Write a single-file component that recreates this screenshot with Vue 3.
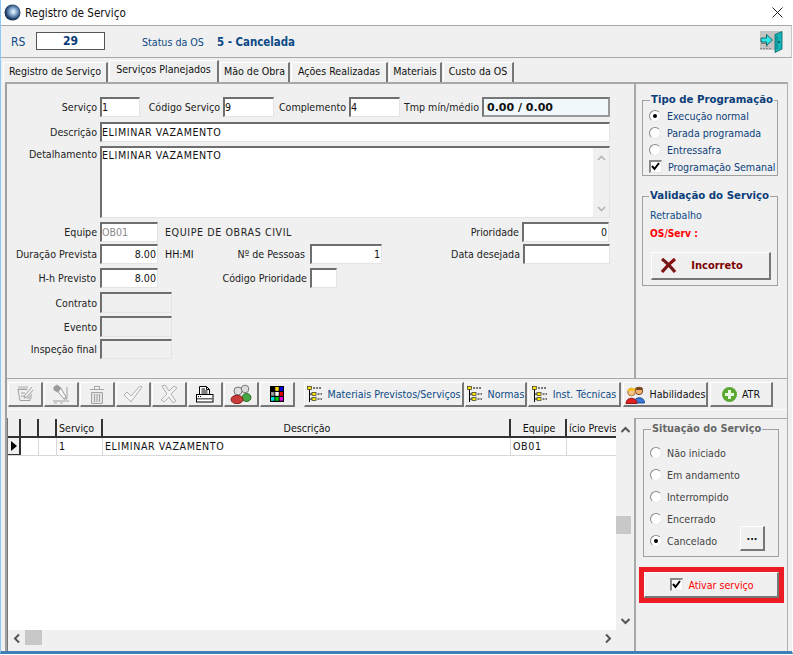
<script setup>
const tabs = ['Registro de Serviço', 'Serviços Planejados', 'Mão de Obra', 'Ações Realizadas', 'Materiais', 'Custo da OS']
const tabClasses = ['t0', 't1', 't2', 't3', 't4', 't5']
const treeButtons = [
  { label: 'Materiais Previstos/Serviços', cls: 'bm' },
  { label: 'Normas', cls: 'bn' },
  { label: 'Inst. Técnicas', cls: 'bi' }
]
const tipos = [
  { label: 'Execução normal', on: true },
  { label: 'Parada programada', on: false },
  { label: 'Entressafra', on: false }
]
const situacoes = [
  { label: 'Não iniciado', on: false },
  { label: 'Em andamento', on: false },
  { label: 'Interrompido', on: false },
  { label: 'Encerrado', on: false },
  { label: 'Cancelado', on: true }
]
</script>

<template>
  <div class="win">
    <div class="titlebar">
      <svg class="appicon" width="17" height="17" viewBox="0 0 17 17">
        <defs>
          <radialGradient id="sph" cx="0.55" cy="0.45" r="0.6">
            <stop offset="0" stop-color="#f4f8fc" />
            <stop offset="0.35" stop-color="#8fb2d8" />
            <stop offset="0.75" stop-color="#24456f" />
            <stop offset="1" stop-color="#0c1c34" />
          </radialGradient>
        </defs>
        <circle cx="8.5" cy="8.5" r="8" fill="url(#sph)" />
      </svg>
      <span class="wintitle">Registro de Serviço</span>
      <svg class="close" width="11" height="11" viewBox="0 0 11 11">
        <path d="M0.5 0.5 L10.5 10.5 M10.5 0.5 L0.5 10.5" stroke="#222" stroke-width="1" fill="none" />
      </svg>
    </div>

    <div class="header">
      <span class="rs">RS</span>
      <span class="rsbox">29</span>
      <span class="status">Status da OS</span>
      <span class="statusval">5 - Cancelada</span>
      <svg class="exit" width="23" height="22" viewBox="0 0 23 22">
        <rect x="0" y="0" width="22" height="19" fill="#c4c4c4" />
        <path d="M0 17.5 H12" stroke="#8a8a8a" stroke-dasharray="2 1" />
        <path d="M1 12.5 H7 V16" stroke="#7a7a7a" fill="none" />
        <path d="M15 3.5 L22 0.5 V18 L15 21.5 Z" fill="#12b5b8" stroke="#075f66" stroke-width="0.8" />
        <path d="M17 5 V18" stroke="#0a7f86" />
        <circle cx="19" cy="11" r="0.9" fill="#033" />
        <path d="M1 7 H6.5 V3.5 L12.5 9 L6.5 14.5 V11 H1 Z" fill="#2fe6e6" stroke="#0a5f60" stroke-width="0.9" />
      </svg>
    </div>

    <div class="tabs">
      <div v-for="(t, i) in tabs" :key="t" class="tab" :class="[tabClasses[i], { active: i === 1 }]">{{ t }}</div>
    </div>

    <div class="body">
      <div class="upper">
        <div class="form">
          <div class="row r1">
            <label class="lab w92">Serviço</label>
            <span class="inp i1">1</span>
            <label class="lab w79">Código Serviço</label>
            <span class="inp i2">9</span>
            <label class="lab w75">Complemento</label>
            <span class="inp i2">4</span>
            <label class="lab w78">Tmp mín/médio</label>
            <span class="tmp">0.00 / 0.00</span>
          </div>
          <div class="row r2">
            <label class="lab w92">Descrição</label>
            <span class="inp wide caps">ELIMINAR VAZAMENTO</span>
          </div>
          <div class="row r3">
            <label class="lab w92 topl">Detalhamento</label>
            <div class="area">
              <span class="areatext caps">ELIMINAR VAZAMENTO</span>
              <div class="areascroll">
                <svg width="9" height="6" viewBox="0 0 9 6"><path d="M1 5 L4.5 1.5 L8 5" stroke="#b5b5b5" stroke-width="1.6" fill="none" /></svg>
                <svg width="9" height="6" viewBox="0 0 9 6"><path d="M1 1 L4.5 4.5 L8 1" stroke="#b5b5b5" stroke-width="1.6" fill="none" /></svg>
              </div>
            </div>
          </div>
          <div class="row r4">
            <label class="lab w92">Equipe</label>
            <span class="inp i3 grey">OB01</span>
            <span class="free equipe caps">EQUIPE DE OBRAS CIVIL</span>
            <label class="lab prio">Prioridade</label>
            <span class="inp i4 right">0</span>
          </div>
          <div class="row r5">
            <label class="lab w92">Duração Prevista</label>
            <span class="inp i3 right">8.00</span>
            <span class="free hh">HH:MI</span>
            <label class="lab pess">Nº de Pessoas</label>
            <span class="inp i5 right">1</span>
            <label class="lab data">Data desejada</label>
            <span class="inp i4"></span>
          </div>
          <div class="row r6">
            <label class="lab w92 hp">H-h Previsto</label>
            <span class="inp i3 right">8.00</span>
            <label class="lab codp">Código Prioridade</label>
            <span class="inp i6"></span>
          </div>
          <div class="row r7">
            <label class="lab w92">Contrato</label>
            <span class="inp i7 off"></span>
          </div>
          <div class="row r8">
            <label class="lab w92">Evento</label>
            <span class="inp i7 off"></span>
          </div>
          <div class="row r9">
            <label class="lab w92">Inspeção final</label>
            <span class="inp i7 off"></span>
          </div>
        </div>

        <div class="side topside">
          <fieldset class="box tipo">
            <legend class="leg">Tipo de Programação</legend>
            <div v-for="o in tipos" :key="o.label" class="opt navy">
              <span class="radio" :class="{ on: o.on }"></span>{{ o.label }}
            </div>
            <div class="opt navy chk">
              <span class="check">
                <svg width="11" height="11" viewBox="0 0 11 11"><path d="M2 5 L4.5 8 L9 2" stroke="#000" stroke-width="2" fill="none" /></svg>
              </span>Programação Semanal
            </div>
          </fieldset>
          <fieldset class="box valid">
            <legend class="leg vleg">Validação do Serviço</legend>
            <div class="retra">Retrabalho</div>
            <div class="osserv">OS/Serv :</div>
            <div class="btn incorreto">
              <svg width="18" height="15" viewBox="0 0 18 15">
                <path d="M2 1 C6 4 10 8 15 14 M15 1 C10 5 6 9 2 14" stroke="#8a1010" stroke-width="3.2" fill="none" />
                <path d="M3 2 C6 4 10 8 14 13 M3 13 L6 10" stroke="#333" stroke-width="1" fill="none" />
              </svg>
              <span>Incorreto</span>
            </div>
          </fieldset>
        </div>
      </div>

      <div class="toolbar">
        <div class="btn ico">
          <svg width="20" height="20" viewBox="0 0 20 20" fill="none" stroke="#a0a0a0">
            <path d="M2.5 5.5 H12 M3 5.5 L5 16.5 H15 V11" />
            <path d="M4 2 V5 M6 2 V5 M8 2 V5 M10 2 V5 M12 2 V5" stroke-width="0.8" />
            <path d="M6 9 H10 M6 12 H9 M17 3 L10 11 L9 14 L12 13 L18 6" />
            <path d="M11 15 L17 9 V15 Z" fill="#c8c8c8" stroke="none" />
          </svg>
        </div>
        <div class="btn ico">
          <svg width="20" height="20" viewBox="0 0 20 20" fill="none" stroke="#a0a0a0">
            <path d="M3 3 L6 1 L10 4 L7 8 L3 6 Z" fill="#9a9a9a" />
            <path d="M7 8 L10 4 L15 13 L13 15 Z" fill="#f4f4f4" />
            <path d="M16 3 V15 M2 17 H18 M13 15 L16 15" />
            <path d="M3 19 H6 M9 19 H12" stroke-width="0.8" />
          </svg>
        </div>
        <div class="btn ico">
          <svg width="18" height="21" viewBox="0 0 18 21" fill="none" stroke="#a4a4a4">
            <path d="M2 5.5 H16 M6.5 5 V2.5 H11.5 V5" />
            <path d="M3.5 8.5 H14.5 V19.5 H3.5 Z" fill="#e4e4e4" />
            <path d="M6.5 10 V18 M9 10 V18 M11.5 10 V18" />
          </svg>
        </div>
        <div class="btn ico">
          <svg width="20" height="20" viewBox="0 0 20 20" fill="#f4f4f4" stroke="#b0b0b0"><path d="M1 11 L4 8 L8 12 L17 2 L19 3 L8 18 Z" /></svg>
        </div>
        <div class="btn ico">
          <svg width="20" height="20" viewBox="0 0 20 20" fill="#f4f4f4" stroke="#b0b0b0"><path d="M3 2 L6 1 L10 7 L15 2 L18 4 L12 10 L17 17 L14 19 L10 13 L5 18 L2 16 L8 10 Z" /></svg>
        </div>
        <div class="btn ico">
          <svg width="18" height="17" viewBox="0 0 18 17" fill="none" stroke="#000">
            <path d="M3.5 8.5 V0.5 H10.5 L13.5 3.5 V8.5" fill="#fff" />
            <path d="M10.5 0.5 V3.5 H13.5 M5.5 3 H9 M5.5 5 H11.5 M5.5 7 H11.5" />
            <rect x="0.5" y="8.5" width="16.5" height="7.5" fill="#fff" />
            <rect x="1" y="12" width="16" height="1.5" fill="#666" stroke="none" />
            <path d="M2 10.5 H6" stroke-dasharray="1 1" />
          </svg>
        </div>
        <div class="btn ico">
          <svg width="22" height="20" viewBox="0 0 22 20">
            <circle cx="15" cy="5" r="3.8" fill="#dcdcdc" stroke="#777" />
            <ellipse cx="16.5" cy="13.5" rx="4.5" ry="4" fill="#45a845" stroke="#2f6b2f" />
            <circle cx="8" cy="7" r="4" fill="#e0e0e0" stroke="#777" />
            <ellipse cx="7" cy="15.5" rx="6" ry="4.2" fill="#c93a3a" stroke="#8a2020" />
          </svg>
        </div>
        <div class="btn ico">
          <svg width="14" height="16" viewBox="0 0 14 16">
            <rect width="14" height="16" fill="#000" />
            <rect x="1" y="1" width="3.4" height="3.8" fill="#000" /><rect x="5.3" y="1" width="3.4" height="3.8" fill="#ffe000" /><rect x="9.6" y="1" width="3.4" height="3.8" fill="#0000e0" />
            <rect x="1" y="6" width="3.4" height="3.8" fill="#999" /><rect x="5.3" y="6" width="3.4" height="3.8" fill="#fff" /><rect x="9.6" y="6" width="3.4" height="3.8" fill="#e00000" />
            <rect x="1" y="11" width="3.4" height="3.8" fill="#00e0e0" /><rect x="5.3" y="11" width="3.4" height="3.8" fill="#00d000" /><rect x="9.6" y="11" width="3.4" height="3.8" fill="#e000e0" />
          </svg>
        </div>
        <div v-for="b in treeButtons" :key="b.label" class="btn treebtn" :class="b.cls">
          <svg width="16" height="17" viewBox="0 0 16 17">
            <path d="M2.5 1 V16 M2.5 8 H5 M2.5 13 H5" stroke="#000" fill="none" />
            <rect x="0.5" y="0.5" width="4" height="3" fill="#ffe600" stroke="#333" stroke-width="0.7" />
            <rect x="5" y="6.5" width="4" height="3" fill="#ffe600" stroke="#333" stroke-width="0.7" />
            <rect x="5" y="11.5" width="4" height="3" fill="#ffe600" stroke="#333" stroke-width="0.7" />
            <path d="M6 2 H15 M10.5 8 H15 M10.5 13 H15" stroke="#000" stroke-dasharray="2 1" fill="none" />
          </svg>
          <span>{{ b.label }}</span>
        </div>
        <div class="btn hab">
          <svg width="20" height="19" viewBox="0 0 20 19">
            <circle cx="14" cy="6" r="3.7" fill="#f0b070" stroke="#7a4a2a" />
            <path d="M10 4 C11 1 17 1 18 4 L17 5 H11 Z" fill="#7a4a20" />
            <path d="M9 18 C9 11 19.5 11 19.5 18 Z" fill="#3a78d8" stroke="#1c4a90" />
            <circle cx="6.5" cy="7" r="3.8" fill="#f8c888" stroke="#a8703a" />
            <path d="M2.5 6 C3 2 10 2 10.5 5 L9 6 H4 Z" fill="#f0c020" />
            <path d="M1 18.5 C1 11.5 12 11.5 12 18.5 Z" fill="#e02020" stroke="#901818" />
          </svg>
          <span class="blk">Habilidades</span>
        </div>
        <div class="btn atr">
          <svg width="15" height="15" viewBox="0 0 15 15">
            <circle cx="7.5" cy="7.5" r="7.5" fill="#5aa832" />
            <path d="M7.5 3 V12 M3 7.5 H12" stroke="#e8f8e0" stroke-width="3" />
          </svg>
          <span class="blk">ATR</span>
        </div>
      </div>

      <div class="lower">
        <div class="gridwrap">
          <div class="gridmain">
            <div class="grid">
              <div class="ghead">
                <span class="c0"></span><span class="c1"></span><span class="c2"></span>
                <span class="c3">Serviço</span>
                <span class="c4 ctr">Descrição</span>
                <span class="c5 ctr">Equipe</span>
                <span class="c6">ício Previs</span>
              </div>
              <div class="grow">
                <span class="c0 ind"><i class="tri"></i></span><span class="c1"></span><span class="c2"></span>
                <span class="c3">1</span>
                <span class="c4 caps">ELIMINAR VAZAMENTO</span>
                <span class="c5 caps">OB01</span>
                <span class="c6"></span>
              </div>
            </div>
            <div class="vscroll">
              <svg width="11" height="7" viewBox="0 0 11 7"><path d="M1.5 6 L5.5 2 L9.5 6" stroke="#555" stroke-width="2" fill="none" /></svg>
              <span class="vthumb"></span>
              <svg class="vdown" width="11" height="7" viewBox="0 0 11 7"><path d="M1.5 1 L5.5 5 L9.5 1" stroke="#555" stroke-width="2" fill="none" /></svg>
            </div>
          </div>
          <div class="hscroll">
            <svg width="7" height="11" viewBox="0 0 7 11"><path d="M6 1.5 L2 5.5 L6 9.5" stroke="#555" stroke-width="2" fill="none" /></svg>
            <span class="hthumb"></span>
            <svg class="hright" width="7" height="11" viewBox="0 0 7 11"><path d="M1 1.5 L5 5.5 L1 9.5" stroke="#555" stroke-width="2" fill="none" /></svg>
          </div>
        </div>
        <div class="side lowside">
          <fieldset class="box sit">
            <legend class="leg grayleg">Situação do Serviço</legend>
            <div v-for="o in situacoes" :key="o.label" class="sopt">
              <span class="radio" :class="{ on: o.on }"></span>{{ o.label }}
              <span v-if="o.on" class="btn dots">...</span>
            </div>
          </fieldset>
          <div class="redbox">
            <div class="btn ativar">
              <span class="check">
                <svg width="11" height="11" viewBox="0 0 11 11"><path d="M2 5 L4.5 8 L9 2" stroke="#000" stroke-width="2" fill="none" /></svg>
              </span>
              <span>Ativar serviço</span>
            </div>
          </div>
        </div>
      </div>
    </div>
  </div>
</template>

<style>
html, body { margin: 0; padding: 0; background: #fff; overflow: hidden; }
</style>

<style scoped>
* { box-sizing: border-box; }
.win {
  width: 793px; height: 654px; background: #f0f0f0; overflow: hidden;
  font-family: "DejaVu Sans Condensed", "DejaVu Sans", sans-serif; font-size: 10.6px; color: #111;
  border-left: 1px solid #8fc8f2; border-bottom: 3px solid #3f7fb5; border-right: 1px solid #fff;
  display: flex; flex-direction: column;
}
.titlebar { height: 25px; background: #fff; display: flex; align-items: center; padding-left: 3px; flex: none; }
.appicon { margin-right: 4px; }
.wintitle { font-size: 11.6px; color: #111; }
.close { margin-left: auto; margin-right: 9px; }
.header {
  height: 33px; flex: none; display: flex; align-items: center;
  border-top: 1px solid #a8a8a8; border-bottom: 1px solid #a8a8a8; border-right: 1px solid #c8c8c8;
  color: #0c4a86;
}
.rs { margin-left: 10px; font-size: 12px; width: 25px; }
.rsbox { width: 69px; height: 18px; margin-bottom: 2px; background: #fff; border: 1px solid #555; text-align: center; font-weight: bold; font-size: 12px; line-height: 16px; color: #0b3a78; }
.status { margin-left: 37px; width: 75px; }
.statusval { font-weight: bold; font-size: 11.4px; color: #0c4a86; }
.exit { margin-left: auto; margin-right: 8px; }
.tabs { height: 24px; flex: none; display: flex; align-items: flex-end; padding-left: 2px; position: relative; }
.tab {
  height: 20px; padding-top: 2px; text-align: center; background: #f0f0f0; white-space: nowrap;
  border-top: 1px solid #fff; border-left: 1px solid #fff; border-right: 2px solid #777;
  margin-right: 1px;
}
.tab.active { height: 22px; padding-top: 2px; }
.t0 { width: 105px; }
.t1 { width: 110px; }
.t2 { width: 70px; }
.t3 { width: 97px; }
.t4 { width: 53px; }
.t5 { width: 71px; }
.body { margin: 0 4px 0 4px; flex: 1; min-height: 0; display: flex; flex-direction: column; border-top: 2px solid #a8a8a8; border-left: 2px solid #a0a0a0; border-right: 1px solid #b0b0b0; }
.upper { height: 295px; flex: none; display: flex; border-bottom: 1px solid #a8a8a8; }
.form { width: 627px; flex: none; padding-top: 13px; }
.side { flex: 1; border-left: 2px solid #a8a8a8; }
.topside { padding-left: 6px; }
.row { display: flex; align-items: center; height: 20px; }
.r2 { margin-top: 5px; }
.r3 { margin-top: 4px; height: 72px; align-items: flex-start; }
.r4 { margin-top: 4px; }
.r5 { margin-top: 2px; }
.r6 { margin-top: 4px; }
.r7 { margin-top: 4px; height: 21px; }
.r8 { margin-top: 3px; height: 21px; }
.r9 { margin-top: 2px; }
.lab { text-align: right; white-space: nowrap; flex: none; padding-right: 3px; color: #222; }
.w92 { width: 93px; }
.w79 { width: 83px; }
.w75 { width: 75px; }
.w78 { width: 82px; }
.topl { padding-top: 2px; }
.hp { padding-right: 4px; }
.caps { letter-spacing: 0.6px; }
.inp {
  flex: none; height: 20px; background: #fff; display: block; line-height: 17px; padding-left: 0; white-space: nowrap;
  border-top: 2px solid #6e6e6e; border-left: 2px solid #6e6e6e; border-right: 1px solid #e4e4e4; border-bottom: 1px solid #e4e4e4;
}
.i1 { width: 40px; }
.i2 { width: 51px; }
.i3 { width: 58px; }
.i4 { width: 87px; }
.i5 { width: 72px; }
.i6 { width: 27px; }
.i7 { width: 72px; height: 100%; }
.wide { width: 510px; }
.right { text-align: right; padding-right: 1px; }
.grey { color: #8a8a8a; }
.off { background: #f0f0f0; }
.tmp {
  flex: none; width: 128px; height: 20px; background: #f0f8fc; border: 2px solid #777; border-right-color: #999; border-bottom-color: #999;
  font-family: "DejaVu Sans", sans-serif; font-weight: bold; font-size: 11px; line-height: 17px; padding-left: 3px; color: #111;
}
.area {
  position: relative; width: 510px; height: 72px; background: #fff; padding-left: 0; padding-top: 1px; flex: none;
  border-top: 2px solid #6e6e6e; border-left: 2px solid #6e6e6e; border-right: 1px solid #e4e4e4; border-bottom: 1px solid #e4e4e4;
}
.areascroll { position: absolute; right: 0; top: 0; bottom: 0; width: 16px; background: #f0f0f0; display: flex; flex-direction: column; justify-content: space-between; align-items: center; padding: 7px 0 5px; }
.free { flex: none; }
.equipe { margin-left: 7px; width: 270px; color: #222; }
.prio { width: 87px; }
.hh { margin-left: 7px; width: 55px; }
.pess { width: 90px; padding-right: 5px; }
.data { width: 141px; }
.codp { width: 152px; }
.box { border: 1px solid #a0a0a0; margin: 0; padding: 0; border-radius: 0; min-width: 0; }
.leg { font-family: "DejaVu Sans", sans-serif; font-weight: bold; font-size: 10.2px; color: #0c3f7a; padding: 0 1px; margin-left: 7px; line-height: 14px; white-space: nowrap; }
.vleg { margin-left: -1px; }
.grayleg { color: #666; margin-left: 1px; font-size: 9.8px; }
.tipo { margin-top: 9px; width: 136px; height: 83px; }
.opt { display: flex; align-items: center; height: 17px; padding-left: 6px; }
.navy { color: #0c3f7a; }
.radio {
  width: 12px; height: 12px; border-radius: 50%; flex: none; margin-right: 6px; background: #fff;
  border: 1px solid #8a8a8a; border-right-color: #e8e8e8; border-bottom-color: #e8e8e8; position: relative;
}
.radio.on::after { content: ""; position: absolute; left: 3px; top: 3px; width: 4px; height: 4px; background: #000; border-radius: 50%; }
.check { width: 13px; height: 13px; flex: none; background: #fff; border: 2px solid #8a8a8a; border-right: 1px solid #e8e8e8; border-bottom: 1px solid #e8e8e8; margin-right: 6px; display: block; line-height: 0; }
.check svg { display: block; margin: -1px 0 0 -1px; }
.valid { margin-top: 13px; width: 136px; height: 97px; padding: 5px 0 0 7px; }
.retra { color: #0c4a86; line-height: 15px; }
.osserv { color: #f00; font-weight: bold; font-size: 10.2px; line-height: 15px; margin-top: 3px; }
.btn {
  background: #f0f0f0; border-top: 1px solid #fff; border-left: 1px solid #fff; border-right: 2px solid #777; border-bottom: 2px solid #777;
  display: flex; align-items: center; justify-content: center; flex: none;
}
.incorreto { width: 120px; height: 28px; margin: 11px 0 0 1px; font-weight: bold; color: #7a0000; font-size: 11px; gap: 13px; padding-right: 18px; }
.toolbar { height: 31px; flex: none; display: flex; padding: 3px 0 0 1px; border-bottom: 1px solid #fbfbfb; align-items: flex-start; }
.toolbar .btn { height: 25px; margin-right: 1px; color: #0c4a86; gap: 5px; white-space: nowrap; }
.ico { width: 35px; }
.bm { margin-left: 8px; width: 160px; }
.bn { width: 62px; }
.bi { width: 93px; }
.hab { width: 85px; margin-left: 1px; }
.atr { width: 63px; margin-left: 1px; gap: 6px; }
.blk { color: #111; }
.lower { flex: 1; min-height: 0; display: flex; margin-top: 8px; }
.gridwrap { flex: none; display: flex; flex-direction: column; border-left: 1px solid #777; width: 627px; padding-top: 1px; }
.gridmain { flex: 1; display: flex; min-height: 0; }
.grid { flex: 1; background: #fff; overflow: hidden; }
.ghead, .grow { display: flex; }
.ghead { height: 19px; background: #f0f0f0; border-bottom: 2px solid #333; line-height: 18px; }
.grow { height: 18px; border-bottom: 1px solid #d8d8d8; line-height: 17px; }
.ghead span { border-right: 2px solid #333; padding-left: 2px; white-space: nowrap; overflow: hidden; }
.grow span { border-right: 1px solid #d8d8d8; padding-left: 2px; white-space: nowrap; overflow: hidden; }
.c0 { width: 13px; flex: none; }
.c1 { width: 18px; flex: none; }
.c2 { width: 18px; flex: none; }
.c3 { width: 46px; flex: none; }
.c4 { width: 408px; flex: none; }
.c5 { width: 56px; flex: none; }
.c6 { flex: 1; border-right: none !important; }
.ctr { text-align: center; }
.ind { background: #f0f0f0; border-right: 2px solid #333 !important; border-bottom: 1px solid #333; padding: 0 !important; position: relative; }
.tri { position: absolute; left: 3px; top: 3px; border-left: 6px solid #000; border-top: 5.5px solid transparent; border-bottom: 5.5px solid transparent; }
.vscroll { width: 18px; flex: none; background: #f0f0f0; display: flex; flex-direction: column; align-items: center; padding-top: 7px; position: relative; }
.vthumb { position: absolute; top: 97px; left: 0; width: 15px; height: 18px; background: #c8c8c8; }
.vdown { margin-top: auto; margin-bottom: 5px; }
.hscroll { height: 16px; margin-bottom: 5px; flex: none; width: 608px; background: #f0f0f0; display: flex; align-items: center; padding-left: 5px; position: relative; }
.hthumb { position: absolute; left: 17px; top: 0; width: 17px; height: 15px; background: #c8c8c8; }
.hright { margin-left: auto; margin-right: 4px; }
.lowside { border-top: 1px solid #a8a8a8; }
.sit { margin: 3px 0 0 7px; width: 136px; height: 135px; padding: 6px 0 0 6px; color: #444; }
.sit .radio { margin-right: 5px; }
.sopt { height: 22px; display: flex; align-items: center; position: relative; }
.dots { position: absolute; left: 90px; top: -4px; width: 25px; height: 25px; color: #111; font-weight: bold; padding-bottom: 5px; }
.redbox { margin: 10px 0 0 3px; width: 145px; height: 36px; border: 5px solid #ed1c24; }
.ativar { width: 135px; height: 26px; color: #f00; gap: 0; padding-left: 2px; }
.ativar .check { margin-right: 5px; }
</style>
